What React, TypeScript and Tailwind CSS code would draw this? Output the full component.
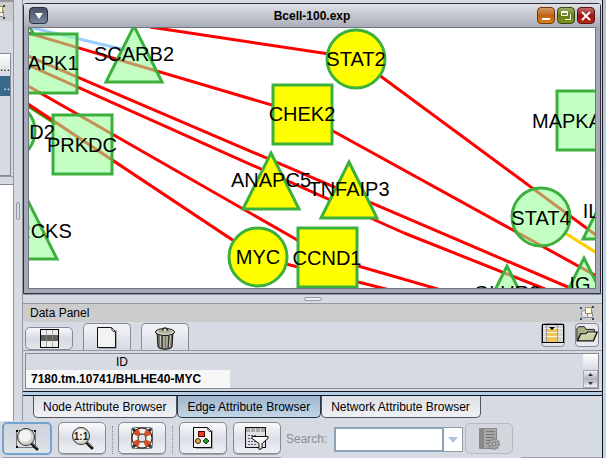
import React from "react";

type GraphNode = {
  label: string;
  shape: "square" | "circle" | "triangle";
  x: number;
  y: number;
  labelX?: number;
  labelY: number;
  selected?: boolean;
};

const NODES: GraphNode[] = [
  { label: "APK1", shape: "square", x: 47, y: 63, labelX: 53, labelY: 70 },
  { label: "SCARB2", shape: "triangle", x: 134, y: 54, labelY: 61 },
  { label: "D2", shape: "circle", x: 6, y: 131, labelX: 42, labelY: 139 },
  { label: "PRKDC", shape: "square", x: 82, y: 144, labelY: 152 },
  { label: "RCKS", shape: "triangle", x: 29, y: 231, labelX: 44, labelY: 238 },
  { label: "STAT2", shape: "circle", x: 356, y: 59, labelY: 66, selected: true },
  { label: "CHEK2", shape: "square", x: 302, y: 114, labelY: 121, selected: true },
  { label: "ANAPC5", shape: "triangle", x: 271, y: 181, labelY: 187, selected: true },
  { label: "TNFAIP3", shape: "triangle", x: 349, y: 190, labelY: 196, selected: true },
  { label: "MYC", shape: "circle", x: 258, y: 257, labelY: 264, selected: true },
  { label: "CCND1", shape: "square", x: 327, y: 257, labelY: 265, selected: true },
  { label: "MAPKA", shape: "square", x: 586, y: 120, labelX: 567, labelY: 128 },
  { label: "STAT4", shape: "circle", x: 541, y: 217, labelY: 225 },
  { label: "IL", shape: "triangle", x: 611, y: 211, labelX: 591, labelY: 218 },
  { label: "IG", shape: "triangle", x: 584, y: 286, labelX: 580, labelY: 291 },
  { label: "GLUR2", shape: "triangle", x: 507, y: 294, labelY: 300 },
];

const EDGES: [number, number, number, number, string][] = [
  [33, 28, 134, 52, "#99ccff"],
  [565, 233, 600, 255, "#ffcc00"],
  [28, 106, 56, 124, "#2f9a00"],
  [150, 27, 356, 58, "#ff0000"],
  [356, 58, 600, 238, "#ff0000"],
  [28, 33, 302, 114, "#ff0000"],
  [302, 114, 600, 278, "#ff0000"],
  [28, 56, 570, 288, "#ff0000"],
  [28, 65, 404, 233, "#ff0000"],
  [404, 233, 545, 289, "#ff0000"],
  [28, 86, 327, 257, "#ff0000"],
  [28, 104, 258, 257, "#ff0000"],
  [258, 257, 390, 290, "#ff0000"],
  [327, 257, 441, 290, "#ff0000"],
];

function NodeShape({ node }: { node: GraphNode }) {
  const style = {
    fill: node.selected ? "#ffff00" : "#95ff95",
    fillOpacity: node.selected ? 1 : 0.57,
    stroke: "#3cb03c",
    strokeWidth: 3,
  };
  const { x, y } = node;
  if (node.shape === "square") return <rect x={x - 29} y={y - 29} width="59" height="59" {...style} />;
  if (node.shape === "circle") return <circle cx={x} cy={y} r="29" {...style} />;
  return <path d={`M${x} ${y - 28} L${x + 28} ${y + 28} H${x - 28} Z`} {...style} />;
}

function NetworkView() {
  return (
    <svg className="block h-[260px] w-full bg-white" role="img" aria-label="Network">
      <g transform="translate(-29 -28)">
        {EDGES.map(([x1, y1, x2, y2, color], i) => (
          <line key={i} x1={x1} y1={y1} x2={x2} y2={y2} stroke={color} strokeWidth="3" />
        ))}
        <path d="M29 26 L35 36" stroke="#3cb03c" strokeWidth="3" />
        {NODES.map((n) => <NodeShape key={n.label} node={n} />)}
        {NODES.map((n) => (
          <text key={n.label} x={n.labelX ?? n.x} y={n.labelY} textAnchor="middle" className="font-['Liberation_Sans',Arial,sans-serif] text-[20px]" fill="#000">
            {n.label}
          </text>
        ))}
      </g>
    </svg>
  );
}

function FloatIcon() {
  return (
    <svg width="14" height="14" viewBox="0 0 14 14" className="block shrink-0">
      <rect x="1.500" y="4.500" width="7" height="7" rx="2" fill="#e4e6ea" stroke="#888" />
      <rect x="7.500" y="5.500" width="5" height="6" rx="1" fill="#f0f0ee" stroke="#888" />
      <rect x="5.500" y="1.500" width="6" height="6" fill="#fffbe6" stroke="#a09050" />
      <path d="M0 1h2v2H0zM12 0h2v2h-2zM0 12h2v2H0zM12 12h2v2h-2z" fill="#24497c" />
    </svg>
  );
}

function TableIcon() {
  return (
    <svg width="19" height="20" viewBox="0 0 19 20" className="block shrink-0">
      <rect x="0.500" y="0.500" width="18" height="18" fill="#ececec" stroke="#000" />
      <path d="M6.500 1v17M12.500 1v17" stroke="#aaa" />
      <path d="M1 6h17v6H1z" fill="#5e5e5e" />
      <path d="M6.500 6v6M12.500 6v6" stroke="#808080" />
    </svg>
  );
}

function PageIcon() {
  return (
    <svg width="22" height="24" viewBox="0 0 22 24" className="block shrink-0">
      <path d="M3 4h18v19H3z" fill="#666" opacity=".45" />
      <path d="M1.500 1.500h14l4 4v16h-18z" fill="#f3f3f1" stroke="#111" />
      <path d="M14.500 1.500c2 1 0 4 5 4" fill="#fff" stroke="#222" />
    </svg>
  );
}

function TrashIcon() {
  return (
    <svg width="22" height="24" viewBox="0 0 22 24" className="block shrink-0">
      <path d="M3 6l1 15c2 3 12 3 14 0l1-15z" fill="#747467" stroke="#111" />
      <path d="M6.500 9l.5 12M10 10v12M13 10v12M16.500 9l-1 12" stroke="#deded0" />
      <path d="M8 10v12M15 10l-1 12" stroke="#25251f" />
      <ellipse cx="11" cy="6" rx="9.500" ry="3.500" fill="#d5d6c5" stroke="#111" />
      <ellipse cx="11" cy="5.500" rx="7" ry="2" fill="#b1b3a0" />
      <path d="M8.500 5c0-4 5-4 5 0" fill="#ddd" stroke="#333" strokeWidth="1.500" />
    </svg>
  );
}

function ColumnsIcon() {
  return (
    <svg width="22" height="20" viewBox="0 0 22 20" className="block shrink-0">
      <rect x="0.500" y="0.500" width="21" height="18" fill="#d4d4d4" stroke="#000" />
      <path d="M5 4h10v14H5z" fill="#f0c55c" />
      <path d="M1 4.500h20M1 8.500h20M1 12.500h20" stroke="#f6f2e6" />
      <path d="M4.500 1v17M15.500 1v17" stroke="#999" />
      <path d="M7 3h6l-3 3z" fill="#000" />
    </svg>
  );
}

function FolderIcon() {
  return (
    <svg width="22" height="20" viewBox="0 0 24 20" className="block shrink-0">
      <path d="M1 17V4l2-2h6l2 3h9v4" fill="#aeb08b" stroke="#111" />
      <path d="M1.500 17.500L5 10h6l2-2h10l-4 9.500z" fill="#cdd0a9" stroke="#111" strokeWidth="1.500" />
      <path d="M6 11h5l2-2h8" stroke="#f1f2dc" fill="none" />
    </svg>
  );
}

function Magnifier({ actual = false }: { actual?: boolean }) {
  return (
    <svg width="26" height="26" viewBox="0 0 26 26" className="block shrink-0">
      {!actual && (
        <g>
          <rect x="2.500" y="4.500" width="19" height="17" fill="none" stroke="#111" strokeDasharray="1 1" />
          <path d="M2 4h2v2H2zM20 4h2v2h-2zM2 20h2v2H2z" fill="#000" />
        </g>
      )}
      <path d="M17 17l6 6" stroke="#111" strokeWidth="3" strokeLinecap="round" />
      <path d="M18 17l5 5" stroke="#777" />
      <circle cx="12" cy="11" r="8.500" fill={actual ? "#d8d8cf" : "#d2d2d0"} stroke="#333" />
      <circle cx="11" cy="10" r="6" fill="#f3f3f0" />
      {actual && (
        <text x="12" y="15" textAnchor="middle" className="font-['Liberation_Sans',Arial,sans-serif] text-[10px] font-bold" fill="#222">1:1</text>
      )}
    </svg>
  );
}

function LifebuoyIcon() {
  return (
    <svg width="24" height="24" viewBox="0 0 24 24" className="block shrink-0">
      <path d="M3 3l3 3M21 3l-3 3M3 21l3-3M21 21l-3-3" stroke="#333" strokeWidth="3" strokeLinecap="round" />
      <rect x="1.500" y="1.500" width="21" height="21" rx="4" fill="none" stroke="#666" />
      <circle cx="12" cy="12" r="7" fill="none" stroke="#301510" strokeWidth="7" />
      <circle cx="12" cy="12" r="7" fill="none" stroke="#f2f2ee" strokeWidth="5" />
      <circle cx="12" cy="12" r="7" fill="none" stroke="#dc4a20" strokeWidth="5" strokeDasharray="5.500 5.500" strokeDashoffset="8.200" />
    </svg>
  );
}

function VizmapIcon() {
  return (
    <svg width="22" height="24" viewBox="0 0 22 24" className="block shrink-0">
      <path d="M4 4h17v19H4z" fill="#555" opacity=".4" />
      <path d="M1.500 1.500h14l4 4v16h-18z" fill="#f5f5f3" stroke="#000" />
      <path d="M14.500 1.500c2 1 0 4 5 4" fill="#fff" stroke="#222" />
      <rect x="6.500" y="5.500" width="6" height="5" fill="#e04020" stroke="#500" />
      <circle cx="6" cy="15" r="2.500" fill="#eeaa44" stroke="#222" />
      <path d="M14 12l3 3-3 3-3-3z" fill="#269926" stroke="#143814" />
    </svg>
  );
}

function FilterIcon() {
  return (
    <svg width="24" height="24" viewBox="0 0 24 24" className="block shrink-0">
      <rect x="0.500" y="1.500" width="20" height="20" fill="#e0e0e0" stroke="#111" />
      <path d="M1 2h19v4H1z" fill="#aaa" />
      <path d="M5.500 2v4M10.500 2v4M15.500 2v4" stroke="#ddd" />
      <path d="M3 9.500h8M3 12.500h8M3 15.500h8M3 18.500h8" stroke="#55558b" strokeDasharray="2 1" />
      <path d="M7 10.500h16v2l-6 5v5l-3 1v-6l-7-5z" fill="#fafafa" stroke="#111" />
    </svg>
  );
}

function ConfigIcon() {
  return (
    <svg width="22" height="24" viewBox="0 0 22 24" className="block shrink-0">
      <path d="M1.500 1.500h17v20h-17z" fill="#a7a7a7" stroke="#888" />
      <path d="M2 2h4v19H2z" fill="#888" />
      <path d="M8 4.500h9M8 7.500h9M8 10.500h8M8 13.500h5M8 16.500h3" stroke="#777" />
      <circle cx="16" cy="17" r="5" fill="#aaa" stroke="#888" strokeWidth="2" strokeDasharray="2 1" />
      <circle cx="16" cy="17" r="2" fill="#bbb" stroke="#777" />
    </svg>
  );
}

function ToolButton({ label, children, focused = false }: { label: string; children: React.ReactNode; focused?: boolean }) {
  return (
    <button
      aria-label={label}
      className={
        focused
          ? "flex h-[33px] w-[50px] shrink-0 items-center justify-center rounded-[5px] border-2 border-[#73a4d1] bg-linear-to-b from-[#cdd2db] to-[#dfe3ea]"
          : "flex h-8 w-12 shrink-0 items-center justify-center rounded-[5px] border border-[#858a93] bg-linear-to-b from-[#fafafc] via-[#dcdfe6] to-[#eef0f4] shadow-[0_1px_0_#a5a8b0]"
      }
    >
      {children}
    </button>
  );
}

function PanelTab({ label, children, short = false }: { label: string; children: React.ReactNode; short?: boolean }) {
  return (
    <button
      aria-label={label}
      className={
        short
          ? "flex h-[23px] w-12 items-center justify-center rounded-[5px] border border-[#858a93] bg-linear-to-b from-[#f7f8fa] via-[#d6dae2] to-[#e3e6ec]"
          : "flex h-[27px] w-12 items-end justify-center rounded-t-[5px] border border-b-0 border-[#858a93] bg-linear-to-b from-[#f3f4f7] to-[#d6dae2]"
      }
    >
      {children}
    </button>
  );
}

function BrowserTab({ label, selected = false }: { label: string; selected?: boolean }) {
  return (
    <button
      role="tab"
      aria-selected={selected}
      className={
        selected
          ? "h-[22px] rounded-b-[5px] border-x border-b border-[#263746] bg-linear-to-b from-[#9eb6cd] to-[#c4d6e6] pr-[10px] pl-[9px] whitespace-nowrap"
          : "h-[22px] rounded-b-[5px] border-x border-b border-[#50535a] bg-linear-to-b from-[#dcdfe6] to-[#f1f2f5] pr-[10px] pl-[9px] whitespace-nowrap"
      }
    >
      {label}
    </button>
  );
}

function LeftStrip() {
  return (
    <div className="flex w-[13px] shrink-0 flex-col overflow-hidden border-t-2 border-[#9498a3] bg-white">
      <div className="flex h-[19px] justify-end overflow-hidden bg-[#cccccc] pt-[3px] pr-2">
        <FloatIcon />
      </div>
      <div className="flex h-[156px] flex-col border-b border-[#9498a3] bg-[#d6dae2] pt-8 pr-[2px]">
        <div className="flex grow flex-col border-t border-r border-b border-[#858994] text-right">
          <div className="h-[22px] bg-linear-to-b from-white to-[#d6dae2] leading-[26px]">...</div>
          <div className="h-5 bg-[#38698c] leading-5 text-white">..</div>
        </div>
      </div>
      <div className="h-2 border-b border-[#858994] bg-[#d6dae2]" />
    </div>
  );
}

function NetworkFrame() {
  return (
    <section className="rounded-t-[3px] border border-[#2c2e38] bg-[#a5a9b5] px-[4px] pb-[4px]">
      <header className="-mx-[4px] flex h-[23px] items-center bg-linear-to-b from-[#e0e2e7] to-[#a9adb8] px-[5px]">
        <div className="flex flex-1">
          <button aria-label="Window menu" className="flex h-[17px] w-[19px] items-center justify-center rounded-[4px] border border-[#252d3e] bg-linear-to-b from-[#465066] to-[#7b869e]">
            <svg width="8" height="6" viewBox="0 0 8 6"><path d="M0 0h8L4 6z" fill="#fff" /></svg>
          </button>
        </div>
        <h1 className="font-bold">Bcell-100.exp</h1>
        <div className="flex flex-1 justify-end gap-[2px]">
          <button aria-label="Minimize" className="flex h-[17px] w-[18px] items-center justify-center rounded-[4px] border border-[#78320a] bg-linear-to-b from-[#d19c61] via-[#bd6110] to-[#d8801b]">
            <svg width="10" height="10"><path d="M1 7h8v2H1z" fill="#fff" /></svg>
          </button>
          <button aria-label="Restore" className="flex h-[17px] w-[18px] items-center justify-center rounded-[4px] border border-[#39480b] bg-linear-to-b from-[#a0ad67] via-[#667b10] to-[#81951c]">
            <svg width="12" height="11" fill="none" stroke="#fff"><path d="M1.500 1.500h6v4h-6zM1 2.500h7M10.500 4v5.500H5" /></svg>
          </button>
          <button aria-label="Close" className="flex h-[17px] w-[18px] items-center justify-center rounded-[4px] border border-[#5a1111] bg-linear-to-b from-[#bd6a68] via-[#991414] to-[#bd271b]">
            <svg width="10" height="10" stroke="#fff" strokeWidth="2"><path d="M1 1l8 8M9 1l-8 8" /></svg>
          </button>
        </div>
      </header>
      <div className="border border-[#6f7483]">
        <NetworkView />
      </div>
    </section>
  );
}

function DataPanel() {
  return (
    <section className="flex flex-col">
      <header className="flex h-[19px] items-center justify-between border-t border-[#9498a3] bg-[#cccccc] pr-2 pl-[7px]">
        <h2>Data Panel</h2>
        <FloatIcon />
      </header>
      <div className="flex h-[29px] items-end justify-between border-b border-[#9498a3] pr-[3px] pl-[2px]">
        <div className="flex items-end gap-[10px]">
          <PanelTab label="Select attributes" short><TableIcon /></PanelTab>
          <PanelTab label="New attribute"><PageIcon /></PanelTab>
          <PanelTab label="Delete attribute"><TrashIcon /></PanelTab>
        </div>
        <div className="flex gap-[10px] pb-[3px]">
          <button aria-label="Columns" className="flex h-6 w-6 items-start justify-center rounded-[4px] border border-[#858a93] bg-[#e3e5ea]"><ColumnsIcon /></button>
          <button aria-label="Open folder" className="flex h-6 w-6 items-start justify-center rounded-[4px] border border-[#858a93] bg-[#e8eaee]"><FolderIcon /></button>
        </div>
      </div>
      <div className="mr-[3px] ml-[2px] mt-[2px] flex h-9 justify-between border border-[#858994]">
        <table className="w-[204px] border-collapse self-start">
          <thead>
            <tr><th className="h-4 p-0 pr-[12px] text-center leading-4 font-normal">ID</th></tr>
          </thead>
          <tbody>
            <tr><td className="h-[18px] bg-[#f7f7f8] p-0 pl-[5px] leading-[18px] font-bold whitespace-nowrap">7180.tm.10741/BHLHE40-MYC</td></tr>
          </tbody>
        </table>
        <div className="flex w-[15px] flex-col">
          <div className="h-4 bg-linear-to-b from-white to-[#d6dae2]" />
          <button aria-label="Scroll" className="flex h-[18px] flex-col items-center justify-between border border-[#a5a9b3] bg-linear-to-b from-[#eff0f4] via-[#afb3bd] to-[#eff0f4] py-[2px]">
            <svg width="5" height="3"><path d="M0 3h5L2.500 0z" fill="#333" /></svg>
            <svg width="5" height="3"><path d="M0 0h5L2.500 3z" fill="#333" /></svg>
          </button>
        </div>
      </div>
    </section>
  );
}

function Toolbar() {
  return (
    <div className="flex h-[37px] items-start pt-[1px] pl-[2px]" role="toolbar">
      <div className="flex h-9 w-[279px] shrink-0 items-start justify-between border-b border-[#9ea1a9]">
        <ToolButton label="Zoom to selection" focused><Magnifier /></ToolButton>
        <ToolButton label="Actual size"><Magnifier actual /></ToolButton>
        <span className="mt-1 h-7 border-l border-dotted border-[#858994]" />
        <ToolButton label="Help"><LifebuoyIcon /></ToolButton>
        <span className="mt-1 h-7 border-l border-dotted border-[#858994]" />
        <ToolButton label="Visual mapper"><VizmapIcon /></ToolButton>
        <ToolButton label="Filters"><FilterIcon /></ToolButton>
      </div>
      <label htmlFor="search" className="w-12 shrink-0 pt-[9px] pl-[5px] text-[#8b8e94]">Search:</label>
      <div className="mt-[5px] ml-[5px] flex h-[25px] w-[129px] shrink-0">
        <input id="search" className="w-[110px] rounded-none border-2 border-[#8ea2ba] bg-white px-1 outline-none" />
        <button aria-label="Search options" className="flex grow items-center justify-center border border-l-0 border-[#9499a5] bg-white">
          <svg width="10" height="6"><path d="M0 0h10L5 6z" fill="#aac6e2" /></svg>
        </button>
      </div>
      <button disabled aria-label="Configure search" className="mt-[1px] ml-[2px] flex h-[31px] w-12 shrink-0 items-center justify-center rounded-[5px] border border-[#b5b9c1] bg-[#d3d6dd]"><ConfigIcon /></button>
      <div className="ml-2 h-9 grow border-b border-[#9ea1a9]" />
    </div>
  );
}

export default function App() {
  return (
    <div className="flex min-h-screen overflow-hidden bg-[#d6dae2] font-['Liberation_Sans',Arial,sans-serif] text-[12px] leading-4 text-black">
      <div className="flex min-w-0 flex-1 flex-col">
        <div className="flex">
          <LeftStrip />
          <div className="flex w-[10px] shrink-0 items-center border-x border-[#9498a3] pl-[2px]">
            <span className="h-[18px] w-1 rounded-[2px] border border-[#9498a3]" />
          </div>
          <main className="flex min-w-0 flex-1 flex-col">
            <div className="h-[3px]" />
            <div className="pr-[1px]"><NetworkFrame /></div>
            <div className="flex h-[9px] items-center justify-center border-t border-[#9498a3]">
              <span className="h-1 w-[18px] rounded-[2px] border border-[#9498a3] bg-[#eef0f4]" />
            </div>
            <DataPanel />
            <div className="mt-[2px] h-[5px] border-y border-[#10141e] bg-[#b5cce3]" />
            <div className="flex h-[25px] pl-[10px]" role="tablist">
              <BrowserTab label="Node Attribute Browser" />
              <BrowserTab label="Edge Attribute Browser" selected />
              <BrowserTab label="Network Attribute Browser" />
            </div>
          </main>
        </div>
        <Toolbar />
      </div>
      <div className="w-[4px] shrink-0 border-l border-[#15171c] bg-linear-to-b from-[#b7c2cd] via-[#bcd6ef] to-[#bcd6ef]" />
    </div>
  );
}
